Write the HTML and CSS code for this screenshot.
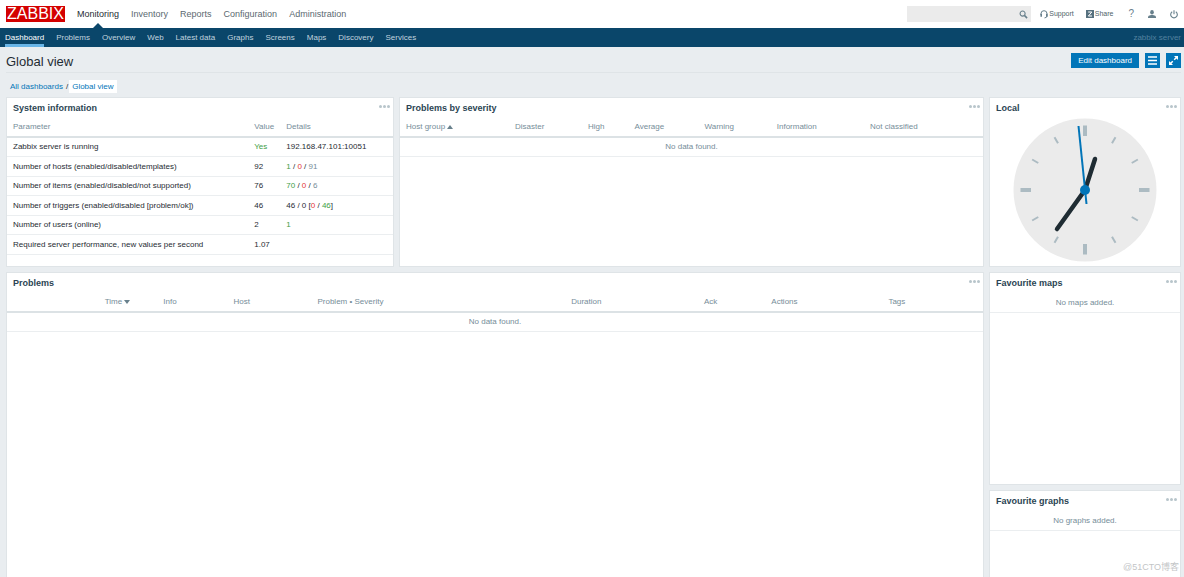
FILE: index.html
```html
<!DOCTYPE html>
<html lang="en">
<head>
<meta charset="utf-8">
<title>Global view</title>
<meta name="viewport" content="width=device-width, initial-scale=1">
<link rel="stylesheet" href="styles.css">
</head>
<body>
<header class="topbar">
  <a class="logo" href="#">ZABBIX</a>
  <nav class="main-nav" aria-label="Main">
    <a class="current" href="#">Monitoring</a>
    <a href="#">Inventory</a>
    <a href="#">Reports</a>
    <a href="#">Configuration</a>
    <a href="#">Administration</a>
  </nav>
  <form class="search" role="search">
    <input type="text" aria-label="Search">
    <button type="button" aria-label="Search">
      <svg width="9" height="9" viewBox="0 0 10 10" fill="none" stroke="#68808c"><circle cx="4" cy="4" r="2.8" stroke-width="1.2"/><path d="M6 6l3 3" stroke-width="1.7"/></svg>
    </button>
  </form>
  <nav class="user-nav" aria-label="User">
    <a href="#"><svg width="8" height="9" viewBox="0 0 8 9" fill="none" stroke="#68808c"><path d="M1 5V3.7a3 3 0 0 1 6 0V6q0 1.7-2.5 1.9" stroke-width="1"/><path d="M1.2 3.8v3M6.8 3.8v3" stroke-width="1.6"/></svg>Support</a>
    <a href="#"><svg width="8" height="8" viewBox="0 0 8 8"><path d="M0 0h8v8H0z" fill="#56707e"/><path d="M2.2 2h3.6L2.4 6H6" fill="none" stroke="#fff" stroke-width="1"/></svg>Share</a>
    <a class="help" href="#" aria-label="Help">?</a>
    <a href="#" aria-label="Profile"><svg width="8" height="8" viewBox="0 0 8 8" fill="#68808c"><ellipse cx="4" cy="2.2" rx="1.8" ry="2.2"/><path d="M0 8V6.5Q0 5.6 3 5h2q3 .6 3 1.5V8z"/></svg></a>
    <a href="#" aria-label="Sign out"><svg width="8" height="9" viewBox="0 0 8 9" fill="none" stroke="#68808c" stroke-width="1.1"><path d="M2.2 1.8a3.3 3.3 0 1 0 3.6 0M4 .3v4"/></svg></a>
  </nav>
</header>
<nav class="sub-nav" aria-label="Monitoring">
  <a class="current" href="#">Dashboard</a>
  <a href="#">Problems</a>
  <a href="#">Overview</a>
  <a href="#">Web</a>
  <a href="#">Latest data</a>
  <a href="#">Graphs</a>
  <a href="#">Screens</a>
  <a href="#">Maps</a>
  <a href="#">Discovery</a>
  <a href="#">Services</a>
  <span class="server-name">zabbix server</span>
</nav>
<div class="title-bar">
  <h1>Global view</h1>
  <button class="btn" type="button">Edit dashboard</button>
  <button class="btn square" type="button" aria-label="Actions"><svg width="9" height="9" viewBox="0 0 9 9" stroke="#fff" stroke-width="1.4"><path d="M0 1h9M0 4.5h9M0 8h9"/></svg></button>
  <button class="btn square" type="button" aria-label="Fullscreen"><svg width="9" height="9" viewBox="0 0 9 9" fill="#fff" stroke="#fff"><path d="M5 0h4v4zM0 5v4h4z" stroke="none"/><path d="M5.200 3.800l2.300-2.300M3.800 5.200L1.500 7.500" stroke-width="1.5"/></svg></button>
</div>
<nav class="crumbs" aria-label="Breadcrumb">
  <a href="#">All dashboards</a><span>/</span><a class="here" href="#">Global view</a>
</nav>
<main class="dashboard">
  <section class="panel">
    <div class="panel-head"><h2>System information</h2><button class="more" type="button" aria-label="System information menu"><i></i><i></i><i></i></button></div>
    <table class="system">
      <colgroup><col class="c-param"><col class="c-value"><col></colgroup>
      <thead><tr><th>Parameter</th><th>Value</th><th>Details</th></tr></thead>
      <tbody>
        <tr><td>Zabbix server is running</td><td class="green">Yes</td><td>192.168.47.101:10051</td></tr>
        <tr><td>Number of hosts (enabled/disabled/templates)</td><td>92</td><td><span class="green">1</span> / <span class="red">0</span> / <span class="grey">91</span></td></tr>
        <tr><td>Number of items (enabled/disabled/not supported)</td><td>76</td><td><span class="green">70</span> / <span class="red">0</span> / <span class="grey">6</span></td></tr>
        <tr><td>Number of triggers (enabled/disabled [problem/ok])</td><td>46</td><td>46 / 0 [<span class="red">0</span> / <span class="green">46</span>]</td></tr>
        <tr><td>Number of users (online)</td><td>2</td><td class="green">1</td></tr>
        <tr><td>Required server performance, new values per second</td><td>1.07</td><td></td></tr>
      </tbody>
    </table>
  </section>
  <section class="panel">
    <div class="panel-head"><h2>Problems by severity</h2><button class="more" type="button" aria-label="Problems by severity menu"><i></i><i></i><i></i></button></div>
    <table class="severity">
      <colgroup><col class="s-group"><col class="s-disaster"><col class="s-high"><col class="s-average"><col class="s-warning"><col class="s-info"><col></colgroup>
      <thead><tr><th>Host group <b class="sort up"></b></th><th>Disaster</th><th>High</th><th>Average</th><th>Warning</th><th>Information</th><th>Not classified</th></tr></thead>
      <tbody><tr><td class="empty" colspan="7">No data found.</td></tr></tbody>
    </table>
  </section>
  <section class="panel">
    <div class="panel-head"><h2>Local</h2><button class="more" type="button" aria-label="Clock menu"><i></i><i></i><i></i></button></div>
    <svg class="clock" viewBox="0 0 144 144" role="img" aria-label="Clock">
      <circle cx="72" cy="72" r="71.5" fill="#ebebeb"/>
      <g stroke="#acbbc2" stroke-width="4"><path d="M72 7.500v10.500M72 126v10.500M7.500 72h10.500M126 72h10.500"/></g>
      <g stroke="#acbbc2" stroke-width="2">
        <path id="tick" d="M72 11v7" transform="rotate(30 72 72)"/>
        <use href="#tick" transform="rotate(30 72 72)"/>
        <use href="#tick" transform="rotate(90 72 72)"/>
        <use href="#tick" transform="rotate(120 72 72)"/>
        <use href="#tick" transform="rotate(180 72 72)"/>
        <use href="#tick" transform="rotate(210 72 72)"/>
        <use href="#tick" transform="rotate(270 72 72)"/>
        <use href="#tick" transform="rotate(300 72 72)"/>
      </g>
      <path d="M82 41L72 72L44 111" fill="none" stroke="#1f2c33" stroke-width="4.500" stroke-linecap="round"/>
      <path d="M65.500 8L73.500 86" stroke="#0275b8" stroke-width="2"/>
      <circle cx="72" cy="72" r="5" fill="#0275b8"/>
    </svg>
  </section>
  <section class="panel wide">
    <div class="panel-head"><h2>Problems</h2><button class="more" type="button" aria-label="Problems menu"><i></i><i></i><i></i></button></div>
    <table class="problems">
      <colgroup><col class="p-lead"><col class="p-time"><col class="p-info"><col class="p-host"><col class="p-problem"><col class="p-duration"><col class="p-ack"><col class="p-actions"><col></colgroup>
      <thead><tr><th></th><th>Time <b class="sort down"></b></th><th>Info</th><th>Host</th><th>Problem • Severity</th><th>Duration</th><th>Ack</th><th>Actions</th><th>Tags</th></tr></thead>
      <tbody><tr><td class="empty" colspan="9">No data found.</td></tr></tbody>
    </table>
  </section>
  <section class="panel">
    <div class="panel-head"><h2>Favourite maps</h2><button class="more" type="button" aria-label="Favourite maps menu"><i></i><i></i><i></i></button></div>
    <p class="empty note">No maps added.</p>
  </section>
  <section class="panel">
    <div class="panel-head"><h2>Favourite graphs</h2><button class="more" type="button" aria-label="Favourite graphs menu"><i></i><i></i><i></i></button></div>
    <p class="empty note">No graphs added.</p>
  </section>
</main>
<div class="watermark">@51CTO博客</div>
</body>
</html>
```

FILE: styles.css
```css
* { box-sizing: border-box; }
body {
  margin: 0;
  min-height: 100vh;
  display: flex;
  flex-direction: column;
  background: #e9edf0;
  color: #1f2c33;
  font: 8px/12px "Liberation Sans", Arial, sans-serif;
}
a { color: inherit; text-decoration: none; }
button, input { font: inherit; border: 0; padding: 0; margin: 0; border-radius: 0; }
button { cursor: pointer; }
h1, h2, p { margin: 0; }
svg { display: block; }

.topbar {
  display: flex;
  align-items: center;
  height: 28px;
  padding: 0 6px;
  background: #fff;
}
.logo {
  width: 59px;
  background: #d40000;
  color: #fff;
  font-size: 16px;
  line-height: 16px;
  text-align: center;
}
.main-nav {
  display: flex;
  gap: 12px;
  margin-left: 12px;
  color: #5b6970;
  font-size: 9px;
  line-height: 28px;
}
.main-nav .current { position: relative; color: #1f2c33; }
.main-nav .current::after {
  content: "";
  position: absolute;
  left: 50%;
  bottom: 0;
  margin-left: -5px;
  border: 5px solid transparent;
  border-top: 0;
  border-bottom-color: #0a466a;
}
.search {
  display: flex;
  align-items: center;
  width: 124px;
  height: 16px;
  margin-left: auto;
  background: #ebebeb;
}
.search input { flex: 1; min-width: 0; height: 16px; padding: 0 4px; background: transparent; }
.search button { margin-right: 3px; background: transparent; }
.user-nav {
  display: flex;
  align-items: center;
  margin-left: 9px;
  color: #4f5f68;
  font-size: 7px;
}
.user-nav a { display: flex; align-items: center; gap: 1px; margin-right: 12px; }
.user-nav a:nth-child(2) { margin-right: 15px; }
.user-nav a:nth-child(3), .user-nav a:nth-child(4) { margin-right: 14px; }
.user-nav a:last-child { margin-right: 0; }
.user-nav .help { color: #68808c; font-size: 10px; }

.sub-nav {
  display: flex;
  gap: 12px;
  height: 19px;
  padding: 0 3px 0 5px;
  background: #0a466a;
  color: #c0d3df;
  line-height: 19px;
}
.sub-nav .current { color: #fff; border-bottom: 3px solid #69b5e7; }
.server-name { margin-left: auto; color: #52819f; }

.title-bar {
  display: flex;
  align-items: flex-start;
  gap: 6px;
  margin: 0 3px 0 6px;
  padding: 6px 0 2px;
  border-bottom: 1px solid #dfe4e7;
}
.title-bar h1 { margin-right: auto; font-size: 13px; line-height: 17px; font-weight: normal; }
.btn { height: 15px; padding: 0 7px; background: #0275b8; color: #fff; line-height: 15px; }
.btn.square { width: 15px; padding: 0 3px; }

.crumbs { display: flex; align-items: center; padding: 7px 10px 4px; color: #0275b8; line-height: 13px; }
.crumbs span { margin: 0 1px 0 3px; color: #1f2c33; }
.crumbs .here { padding: 0 3px; background: #fff; }

.dashboard {
  flex: 1;
  display: grid;
  grid-template-columns: minmax(0, 388fr) minmax(0, 585fr) minmax(0, 192fr);
  grid-template-rows: minmax(170px, auto) minmax(213px, auto) 1fr;
  gap: 5px;
  margin: 0 3px 0 6px;
}
.panel { background: #fff; border: 1px solid #dfe4e7; }
.panel.wide { grid-column: span 2; grid-row: span 2; }
.panel.wide, .panel:last-child { border-bottom: 0; }
.panel-head { display: flex; align-items: flex-start; justify-content: space-between; height: 20px; padding: 4px 3px 0 6px; }
.panel-head h2 { color: #2b4453; font-size: 9px; line-height: 12px; font-weight: bold; }
.more { display: flex; gap: 1px; padding: 3px 0; background: transparent; }
.more i { width: 3px; height: 3px; border-radius: 50%; background: #b8c5cb; }

table { width: 100%; border-collapse: separate; border-spacing: 0; table-layout: fixed; }
th { height: 20px; padding: 3px 0 4px 6px; border-bottom: 2px solid #dce2e5; color: #768d99; font-weight: normal; line-height: 11px; text-align: left; white-space: nowrap; }
td { height: 19px; padding: 3px 0 3px 6px; border-bottom: 1px solid #ebeef0; white-space: nowrap; }
tr:nth-child(even) td { height: 20px; }
.empty { padding: 3px 0; color: #768d99; text-align: center; }
.note { padding: 4px 0; border-bottom: 1px solid #ebeef0; line-height: 11px; }
.green { color: #429e47; }
.red { color: #e33734; }
.grey { color: #768d99; }
.sort { display: inline-block; border: 3px solid transparent; }
.sort.up { border-top: 0; border-bottom: 4px solid #68808c; }
.sort.down { border-bottom: 0; border-top: 4px solid #68808c; }

.c-param { width: 62.5%; }
.c-value { width: 8.3%; }
.s-group { width: 18.7%; }
.s-disaster { width: 12.5%; }
.s-high { width: 8%; }
.s-average { width: 12%; }
.s-warning { width: 12.4%; }
.s-info { width: 16%; }
.p-lead { width: 9.4%; }
.p-time { width: 6%; }
.p-info { width: 7.2%; }
.p-host { width: 8.6%; }
.p-problem { width: 26%; }
.p-duration { width: 13.6%; }
.p-ack { width: 6.9%; }
.p-actions { width: 12%; }

.clock { width: 100%; height: 144px; }
.watermark {
  position: absolute;
  right: 5px;
  bottom: 3px;
  color: #c3c5c7;
  font: 9px/14px "Liberation Sans", "Noto Sans CJK SC", sans-serif;
}
```
